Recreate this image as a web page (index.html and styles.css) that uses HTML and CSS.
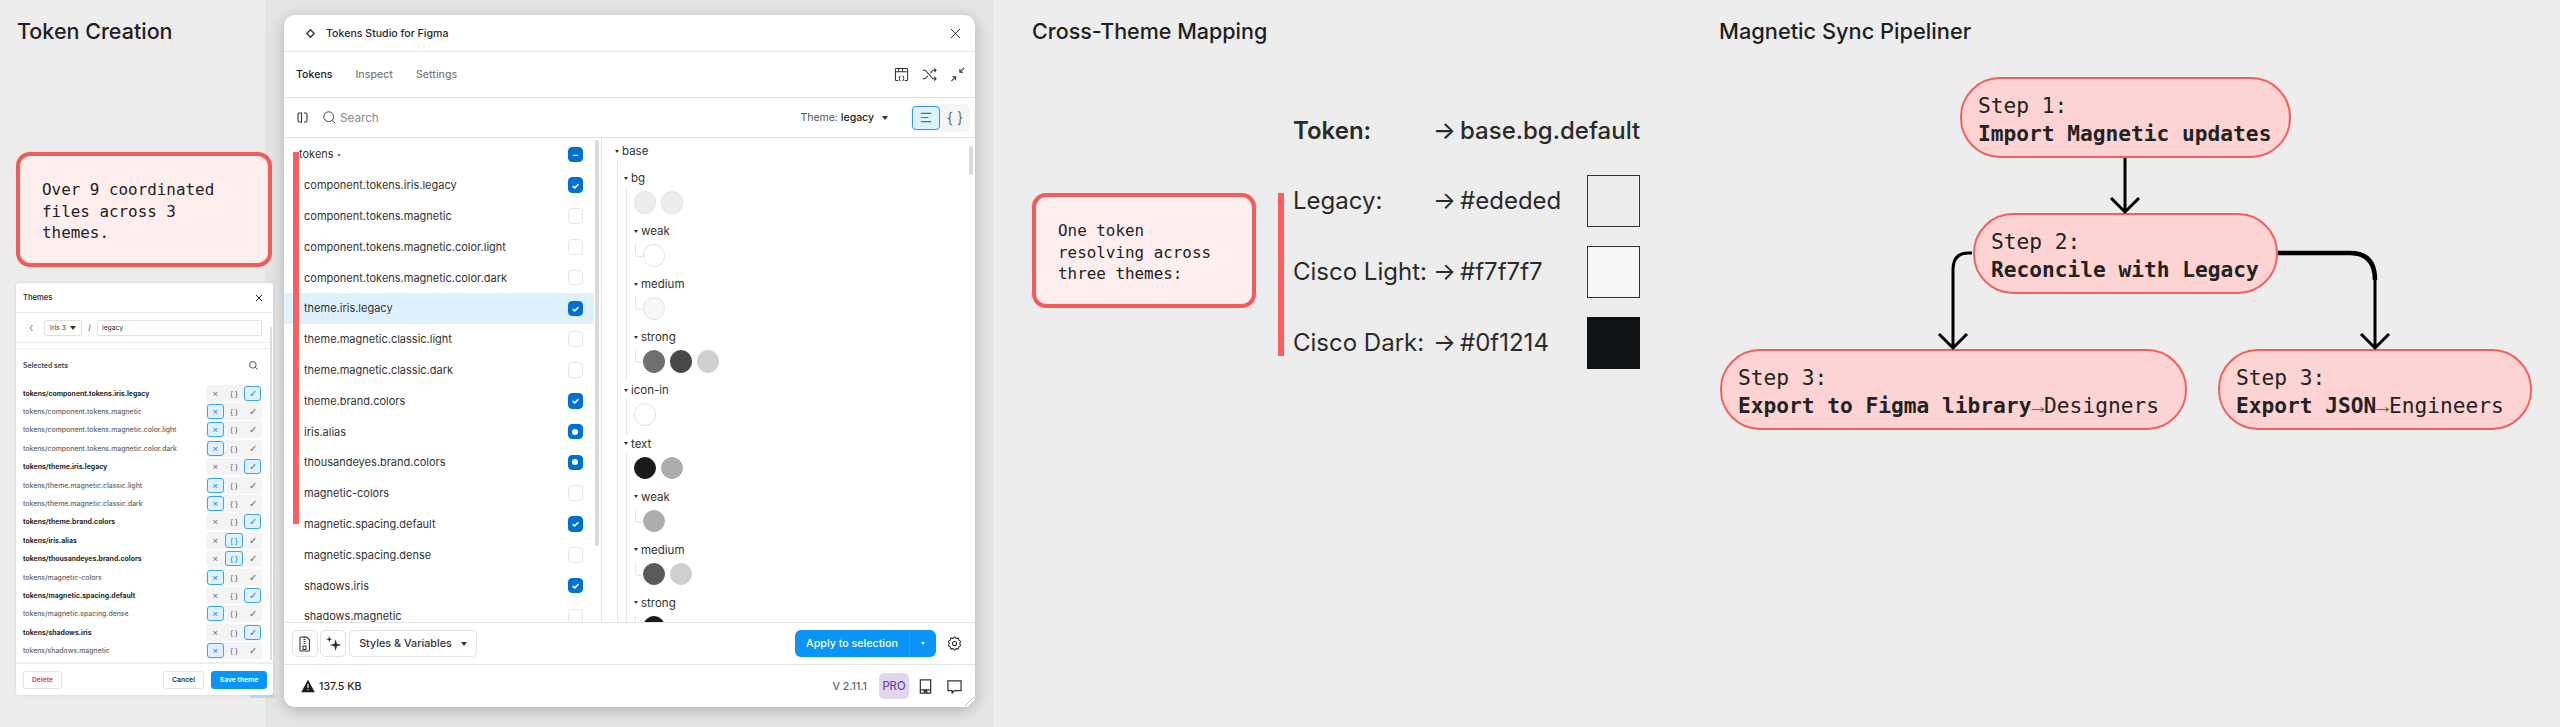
FILE: index.html
```html
<!DOCTYPE html>
<html lang="en">
<head>
<meta charset="utf-8">
<title>Token pipeline</title>
<link rel="stylesheet" href="styles.css">
</head>
<body>
<div class="board">
  <section class="col-create">
    <h2 class="heading">Token Creation</h2>
    <div class="callout callout-create">Over 9 coordinated files across 3 themes.</div>
    <div class="themes">
      <i class="th-behind"></i>
      <i class="th-scroll"></i>
      <div class="th-head"><span>Themes</span><svg class="th-x" viewBox="0 0 10 10"><path d="M2 2l6 6M8 2l-6 6"/></svg></div>
      <div class="th-name">
        <svg class="th-back" viewBox="0 0 6 10"><path d="M4.5 2L2 5l2.5 3"/></svg>
        <div class="th-select">Iris 3 <i class="caret"></i></div>
        <span class="th-slash">/</span>
        <div class="th-input">legacy</div>
      </div>
      <div class="th-gap"></div>
      <div class="th-sets"><span>Selected sets</span><svg class="th-search" viewBox="0 0 12 12"><circle cx="5.3" cy="5.3" r="3.6"/><path d="M8 8l2.5 2.5"/></svg></div>
      <div class="th-list">
        <div class="th-row on"><span>tokens/component.tokens.iris.legacy</span><div class="seg"><b>×</b><b>{ }</b><b class="act">✓</b></div></div>
        <div class="th-row"><span>tokens/component.tokens.magnetic</span><div class="seg"><b class="act">×</b><b>{ }</b><b>✓</b></div></div>
        <div class="th-row"><span>tokens/component.tokens.magnetic.color.light</span><div class="seg"><b class="act">×</b><b>{ }</b><b>✓</b></div></div>
        <div class="th-row"><span>tokens/component.tokens.magnetic.color.dark</span><div class="seg"><b class="act">×</b><b>{ }</b><b>✓</b></div></div>
        <div class="th-row on"><span>tokens/theme.iris.legacy</span><div class="seg"><b>×</b><b>{ }</b><b class="act">✓</b></div></div>
        <div class="th-row"><span>tokens/theme.magnetic.classic.light</span><div class="seg"><b class="act">×</b><b>{ }</b><b>✓</b></div></div>
        <div class="th-row"><span>tokens/theme.magnetic.classic.dark</span><div class="seg"><b class="act">×</b><b>{ }</b><b>✓</b></div></div>
        <div class="th-row on"><span>tokens/theme.brand.colors</span><div class="seg"><b>×</b><b>{ }</b><b class="act">✓</b></div></div>
        <div class="th-row on"><span>tokens/iris.alias</span><div class="seg"><b>×</b><b class="act">{ }</b><b>✓</b></div></div>
        <div class="th-row on"><span>tokens/thousandeyes.brand.colors</span><div class="seg"><b>×</b><b class="act">{ }</b><b>✓</b></div></div>
        <div class="th-row"><span>tokens/magnetic-colors</span><div class="seg"><b class="act">×</b><b>{ }</b><b>✓</b></div></div>
        <div class="th-row on"><span>tokens/magnetic.spacing.default</span><div class="seg"><b>×</b><b>{ }</b><b class="act">✓</b></div></div>
        <div class="th-row"><span>tokens/magnetic.spacing.dense</span><div class="seg"><b class="act">×</b><b>{ }</b><b>✓</b></div></div>
        <div class="th-row on"><span>tokens/shadows.iris</span><div class="seg"><b>×</b><b>{ }</b><b class="act">✓</b></div></div>
        <div class="th-row"><span>tokens/shadows.magnetic</span><div class="seg"><b class="act">×</b><b>{ }</b><b>✓</b></div></div>
      </div>
      <div class="th-foot">
        <div class="th-btn th-delete">Delete</div>
        <div class="th-spacer"></div>
        <div class="th-btn th-cancel">Cancel</div>
        <div class="th-btn th-save">Save theme</div>
      </div>
    </div>
  </section>

  <section class="col-plugin">
    <div class="win">
      <div class="w-title">
        <svg class="w-logo" viewBox="0 0 12 12"><path d="M6 2L10 6 6 10 2 6z"/></svg>
        <span>Tokens Studio for Figma</span>
        <svg class="w-close" viewBox="0 0 12 12"><path d="M1 1l10 10M11 1L1 11"/></svg>
      </div>
      <div class="w-tabs">
        <span class="tab tab-on">Tokens</span><span class="tab">Inspect</span><span class="tab">Settings</span>
        <div class="w-tab-icons">
          <svg class="ic" viewBox="0 0 16 16"><path d="M4.500 14.500H2.500a1 1 0 0 1-1-1V2.500a1 1 0 0 1 1-1h11a1 1 0 0 1 1 1v11a1 1 0 0 1-1 1H11.500M1.500 5h13M5 1.500V5M9 1.500V5M7 9.500q-1 0-1 1.200t-1 1.300q1 0 1 1.300t1 1.200M9 9.500q1 0 1 1.200t1 1.300q-1 0-1 1.300t-1 1.200"/></svg>
          <svg class="ic" viewBox="0 0 16 16"><path d="M1 3.500h2.500l8 9H15M1 12.500h2.500l2.500-3M9 6.500l2.500-3H15M13 1.500l2 2-2 2M13 10.500l2 2-2 2"/></svg>
          <svg class="ic" viewBox="0 0 16 16"><path d="M15 1l-4.500 4.500M10.500 2v3.500H14M1.500 15L6 10.500M2.500 10.500H6V14"/></svg>
        </div>
      </div>
      <div class="w-tool">
        <svg class="ic ic-side" viewBox="0 0 11 11"><path d="M4.500 1H2.500a1.500 1.500 0 0 0-1.500 1.500v6A1.500 1.500 0 0 0 2.500 10h2zM7 1h1.500A1.500 1.500 0 0 1 10 2.500v6A1.500 1.500 0 0 1 8.500 10H7"/></svg>
        <svg class="ic ic-search" viewBox="0 0 16 16"><circle cx="7" cy="7" r="6"/><path d="M11.500 11.500l3.500 3.500"/></svg>
        <span class="search">Search</span>
        <span class="theme">Theme: <em>legacy</em></span>
        <i class="caret caret-theme"></i>
        <div class="mode">
          <span class="mode-on"><svg class="ic ic-blue" viewBox="0 0 16 16"><path d="M2 3.500h11M2 8h8M2 12.500h11"/></svg></span>
          <span class="mode-off">{ }</span>
        </div>
      </div>
      <div class="w-body">
        <div class="sets">
          <i class="redbar"></i>
          <div class="set set-root"><span>tokens <i class="caret caret-small caret-grey"></i></span><i class="cb cb-on">–</i></div>
          <div class="set"><span>component.tokens.iris.legacy</span><i class="cb cb-on">✓</i></div>
          <div class="set"><span>component.tokens.magnetic</span><i class="cb"></i></div>
          <div class="set"><span>component.tokens.magnetic.color.light</span><i class="cb"></i></div>
          <div class="set"><span>component.tokens.magnetic.color.dark</span><i class="cb"></i></div>
          <div class="set set-sel"><span>theme.iris.legacy</span><i class="cb cb-on">✓</i></div>
          <div class="set"><span>theme.magnetic.classic.light</span><i class="cb"></i></div>
          <div class="set"><span>theme.magnetic.classic.dark</span><i class="cb"></i></div>
          <div class="set"><span>theme.brand.colors</span><i class="cb cb-on">✓</i></div>
          <div class="set"><span>iris.alias</span><i class="cb cb-on cb-dot"></i></div>
          <div class="set"><span>thousandeyes.brand.colors</span><i class="cb cb-on cb-dot"></i></div>
          <div class="set"><span>magnetic-colors</span><i class="cb"></i></div>
          <div class="set"><span>magnetic.spacing.default</span><i class="cb cb-on">✓</i></div>
          <div class="set"><span>magnetic.spacing.dense</span><i class="cb"></i></div>
          <div class="set"><span>shadows.iris</span><i class="cb cb-on">✓</i></div>
          <div class="set"><span>shadows.magnetic</span><i class="cb"></i></div>
          <i class="thumb thumb-sets"></i>
        </div>
        <div class="tree">
          <i class="thumb thumb-tree"></i>
          <div class="t-h t-top"><i class="caret caret-small"></i>base</div>
          <div class="t-group">
            <div class="t-h t-h2"><i class="caret caret-small"></i>bg</div>
            <div class="t-group2">
              <div class="dots"><i class="dot d-e"></i><i class="dot d-e"></i></div>
              <div class="t-h t-sub"><i class="caret caret-small"></i>weak</div>
              <div class="dots dots-in"><i class="dot d-w"></i></div>
              <div class="t-h t-sub"><i class="caret caret-small"></i>medium</div>
              <div class="dots dots-in"><i class="dot d-f"></i></div>
              <div class="t-h t-sub"><i class="caret caret-small"></i>strong</div>
              <div class="dots dots-in"><i class="dot d-6"></i><i class="dot d-4"></i><i class="dot d-c"></i></div>
            </div>
            <div class="t-h t-h2"><i class="caret caret-small"></i>icon-in</div>
            <div class="t-group2">
              <div class="dots"><i class="dot d-w"></i></div>
            </div>
            <div class="t-h t-h2"><i class="caret caret-small"></i>text</div>
            <div class="t-group2">
              <div class="dots"><i class="dot d-1"></i><i class="dot d-a"></i></div>
              <div class="t-h t-sub"><i class="caret caret-small"></i>weak</div>
              <div class="dots dots-in"><i class="dot d-a"></i></div>
              <div class="t-h t-sub"><i class="caret caret-small"></i>medium</div>
              <div class="dots dots-in"><i class="dot d-5"></i><i class="dot d-c"></i></div>
              <div class="t-h t-sub"><i class="caret caret-small"></i>strong</div>
              <div class="dots dots-in"><i class="dot d-1"></i></div>
            </div>
          </div>
        </div>
      </div>
      <div class="w-actions">
        <span class="sq"><svg class="ic ic-zip" viewBox="0 0 16 16"><path d="M4 1h5.500L12.500 4v10a1 1 0 0 1-1 1H4a1 1 0 0 1-1-1V2a1 1 0 0 1 1-1zM6.500 1.500h2M8.500 3.500h-2M6.500 5.500h2M8.500 7.500h-2M6 10h3v3.500H6z"/></svg></span>
        <span class="sq"><svg class="ic ic-spark" viewBox="0 0 16 16"><path class="fill" d="M10 4l1.200 4.300L15.500 9.500l-4.300 1.200L10 15l-1.200-4.300L4.500 9.500l4.300-1.200zM4 1l.7 2.300L7 4l-2.300.7L4 7l-.7-2.300L1 4l2.300-.7z"/></svg></span>
        <span class="sv">Styles &amp; Variables <i class="caret caret-sv"></i></span>
        <div class="apply"><span class="apply-main">Apply to selection</span><span class="apply-more"><i class="caret caret-apply"></i></span></div>
        <svg class="ic ic-gear" viewBox="0 0 16 16"><circle cx="8" cy="8" r="2.200"/><path d="M8 1l1.700 1.500 2.300-.2.600 2.200 1.900 1.300-.9 2.200.9 2.200-1.900 1.300-.6 2.200-2.300-.2L8 15l-1.700-1.500-2.300.2-.6-2.200L1.500 10.200 2.400 8l-.9-2.200L3.400 4.500l.6-2.200 2.300.2z"/></svg>
      </div>
      <div class="w-status">
        <svg class="warn" viewBox="0 0 14 14"><path d="M7 .8L13.800 13.200H.2z"/><path class="warn-mark" d="M7 5v4M7 10.300v1"/></svg>
        <span class="size">137.5 KB</span>
        <span class="ver">V 2.11.1</span>
        <span class="pro">PRO</span>
        <svg class="ic ic-book" viewBox="0 0 16 16"><path d="M2.500 1h11v14h-11zM2.500 11.500h11"/><path class="fill" d="M6 11.500h4V15.500L8 14l-2 1.500z"/></svg>
        <svg class="ic ic-chat" viewBox="0 0 16 16"><path d="M1 2h14v10.500H8l-2.500 2.500v-2.500H1z"/></svg>
        <svg class="grip" viewBox="0 0 10 10"><path d="M10 1L1 10M10 5L5 10"/></svg>
      </div>
    </div>
  </section>

  <section class="col-map">
    <h2 class="heading">Cross-Theme Mapping</h2>
    <div class="map">
      <div class="callout callout-map">One token resolving across three themes:</div>
      <div class="map-table">
        <i class="map-bar"></i>
        <div class="m-row m-head"><span>Token:</span><span>→</span><span>base.bg.default</span></div>
        <div class="m-row"><span>Legacy:</span><span>→</span><span>#ededed</span><i class="sw sw-1"></i></div>
        <div class="m-row"><span>Cisco Light:</span><span>→</span><span>#f7f7f7</span><i class="sw sw-2"></i></div>
        <div class="m-row"><span>Cisco Dark:</span><span>→</span><span>#0f1214</span><i class="sw sw-3"></i></div>
      </div>
    </div>
  </section>

  <section class="col-sync">
    <h2 class="heading heading-sync">Magnetic Sync Pipeliner</h2>
    <div class="flow">
      <svg class="edges" viewBox="0 0 860 727">
        <path class="e" d="M425 158V212M411 198L425 212L439 198"/>
        <path class="e" d="M272 253H268Q253 253 253 270V348M239 334L253 348L267 334"/>
        <path class="e e-thick" d="M578 253H650Q675 253 675 280"/>
        <path class="e" d="M675 280V348M661 334L675 348L689 334"/>
      </svg>
      <div class="node n1">Step 1:<br><b>Import Magnetic updates</b></div>
      <div class="node n2">Step 2:<br><b>Reconcile with Legacy</b></div>
      <div class="node n3">Step 3:<br><b>Export to Figma library</b><small>→</small>Designers</div>
      <div class="node n4">Step 3:<br><b>Export JSON</b><small>→</small>Engineers</div>
    </div>
  </section>
</div>
</body>
</html>
```

FILE: styles.css
```css
* { box-sizing: border-box; }
html, body { margin: 0; height: 100%; }
body { background: #ededed; color: #1f1f1f; font-family: Inter, "Liberation Sans", sans-serif; overflow: hidden; }
i, em, b { font-style: normal; }
.board { display: grid; grid-template-columns: 265px 728px 707px 860px; height: 727px; }
.heading { margin: 0; font-size: 21.500px; font-weight: 500; line-height: 26px; }
.heading-sync { font-size: 21.800px; }
.callout { background: #feeeee; border: 4px solid #f55a5a; border-radius: 14px; font-family: "DejaVu Sans Mono", monospace; font-size: 15.900px; line-height: 21.500px; color: #222; }

.col-create { padding: 18px 0 0 17px; }
.callout-create { width: 256px; height: 115px; margin: 108px 0 0 -1px; padding: 23px 22px; position: relative; z-index: 1; }

.themes { width: 257px; height: 412px; margin: 16px 0 0 -1px; background: #fff; border-radius: 3px; box-shadow: 0 0 3px rgba(0,0,0,.12); display: flex; flex-direction: column; font-size: 7.300px; color: #333; position: relative; z-index: 1; }
.th-behind { position: absolute; left: 234px; top: 412px; width: 25px; height: 3px; background: #b9d8ef; }
.th-scroll { position: absolute; right: 1px; top: 44px; width: 2px; height: 333px; background: #dcdcdc; border-radius: 1px; }
.th-head { height: 30px; display: flex; align-items: center; justify-content: space-between; padding: 0 9px 0 7px; border-bottom: 1px solid #e9e9e9; font-weight: 600; font-size: 7.500px; }
.th-x { width: 10px; height: 10px; fill: none; stroke: #222; stroke-width: 1; }
.th-name { display: flex; align-items: center; height: 30px; padding: 0 11px 0 12px; border-bottom: 1px solid #eee; }
.th-back { width: 6px; height: 10px; fill: none; stroke: #777; stroke-width: 1; margin-right: 10px; }
.th-select { width: 38px; height: 16px; border: 1px solid #e0e0e0; border-radius: 3px; display: flex; align-items: center; justify-content: center; gap: 4px; font-size: 6.800px; }
.th-slash { width: 15px; text-align: center; }
.th-input { flex: 1; height: 16px; border: 1px solid #e0e0e0; border-radius: 2px; padding-left: 4px; line-height: 14px; font-size: 6.800px; }
.th-gap { height: 6px; border-bottom: 1px solid #eee; margin-right: 4px; }
.th-sets { display: flex; align-items: center; justify-content: space-between; height: 32px; padding: 0 14px 0 7px; font-weight: 600; font-size: 6.900px; color: #444; }
.th-search { width: 11px; height: 11px; fill: none; stroke: #444; stroke-width: 1; }
.th-list { flex: 1; padding: 3px 11px 0 7px; }
.th-row { display: flex; justify-content: space-between; align-items: center; height: 18.400px; color: #666; font-size: 6.900px; font-weight: 500; }
.th-row.on { color: #2a2a2a; font-weight: 700; }
.seg { width: 56px; height: 17px; background: #f4f4f4; border-radius: 3px; display: grid; grid-template-columns: repeat(3, 1fr); }
.seg b { display: flex; align-items: center; justify-content: center; font-size: 8px; font-weight: 400; color: #666; font-family: "Liberation Sans", sans-serif; white-space: pre; }
.seg b:first-child, .seg b:last-child { font-size: 9.500px; }
.seg .act { background: #dff1fd; border: 1px solid #3aa6f0; border-radius: 3px; color: #1a7fd0; margin: 1px 0.500px; }
.th-foot { height: 33px; border-top: 2px solid #eeeeee; display: flex; align-items: center; padding: 0 6px 0 7px; gap: 7px; font-size: 6.800px; font-weight: 600; }
.th-spacer { flex: 1; }
.th-btn { height: 18px; display: flex; align-items: center; justify-content: center; border-radius: 3px; border: 1px solid #e6e6e6; }
.th-delete { width: 39px; color: #e23b4b; }
.th-cancel { width: 41px; color: #333; }
.th-save { width: 56px; color: #fff; background: #0a94f5; border-color: #0a94f5; }

.col-plugin { background: #e4e4e4; padding: 15px 0 0 19px; }
.win { width: 691px; height: 692px; background: #fff; border-radius: 11px; box-shadow: 0 3px 14px rgba(0,0,0,.22); display: flex; flex-direction: column; overflow: hidden; font-size: 11px; color: #2a2a2a; }
.ic { width: 15px; height: 15px; fill: none; stroke: #333; stroke-width: 1.100; flex: none; }
.w-title { height: 37px; border-bottom: 1px solid #e8e8e8; display: flex; align-items: center; padding: 0 14px 0 21px; font-weight: 500; font-size: 10.600px; }
.w-logo { width: 11px; height: 11px; fill: none; stroke: #333; stroke-width: 1.500; stroke-linejoin: round; margin-right: 10px; }
.w-close { width: 11px; height: 11px; fill: none; stroke: #222; stroke-width: 1; margin-left: auto; }
.w-tabs { height: 46px; border-bottom: 1px solid #e2e2e2; display: flex; align-items: center; padding: 0 10px 0 12px; gap: 23px; }
.tab { color: #7b7b7b; font-weight: 500; font-size: 10.600px; }
.tab-on { color: #222; }
.w-tab-icons { margin-left: auto; display: flex; gap: 13px; }
.w-tool { height: 40px; border-bottom: 1px solid #e2e2e2; display: flex; align-items: center; padding: 0 5px 0 13px; }
.ic-side { width: 11px; height: 11px; }
.ic-search { margin-left: 15px; margin-right: 4px; width: 13px; height: 13px; }
.search { color: #8a8a8a; font-size: 11.700px; }
.theme { margin-left: auto; font-size: 10.500px; color: #555; }
.theme em { color: #222; font-weight: 500; }
.caret { display: inline-block; width: 0; height: 0; border-left: 3px solid transparent; border-right: 3px solid transparent; border-top: 4px solid #333; flex: none; }
.caret-theme { margin: 0 22px 0 8px; }
.caret-small { border-left-width: 2.700px; border-right-width: 2.700px; border-top-width: 3.500px; vertical-align: middle; }
.caret-grey { border-top-color: #888; }
.mode { width: 60px; height: 28px; background: #f5f5f5; border-radius: 6px; display: flex; align-items: center; padding: 0 0 0 2px; }
.mode-on { width: 28px; height: 24px; background: #dff1fd; border: 1px solid #2a9bea; border-radius: 4px; display: flex; align-items: center; justify-content: center; }
.ic-blue { stroke: #1a7fd0; stroke-width: 1.300; }
.mode-off { flex: 1; text-align: center; font-size: 15px; color: #444; font-weight: 300; }
.w-body { flex: none; height: 484px; display: flex; overflow: hidden; }
.sets { width: 318px; border-right: 1px solid #e4e4e4; position: relative; padding-top: 1px; }
.redbar { position: absolute; left: 9px; top: 14px; width: 5.500px; height: 372px; background: #fb5f5f; z-index: 2; }
.set { height: 30.800px; display: flex; align-items: center; justify-content: space-between; padding: 0 11px 0 20px; width: 310px; font-size: 11px; color: #333; }
.set-root { padding-left: 15px; }
.set-sel { background: #def1fd; }
.cb { width: 15.500px; height: 15.500px; border: 1.500px solid #e6e6e6; border-radius: 4px; display: flex; align-items: center; justify-content: center; font-size: 9px; font-weight: 800; color: #fff; background: #fff; }
.cb-on { background: #0070d2; border-color: #0070d2; }
.cb-dot::after { content: ""; width: 6px; height: 6px; border-radius: 50%; background: #fff; }
.thumb { position: absolute; background: #d9d9d9; border-radius: 2px; }
.thumb-sets { right: 2px; top: 2px; width: 4px; height: 406px; }
.thumb-tree { right: 2px; top: 8px; width: 4px; height: 29px; }
.tree { flex: 1; position: relative; padding: 4px 0 0 12.500px; font-size: 11.500px; color: #333; }
.t-h { height: 18px; display: flex; align-items: center; gap: 3.500px; }
.t-group { border-left: 1px solid #e6e6e6; margin-left: 2px; padding: 9px 0 0 6px; }
.t-group2 { border-left: 1px solid #e6e6e6; padding: 4px 0 9.300px 7px; margin-left: 2px; }
.t-sub { margin: 9px 0 4px; }
.dots { display: flex; gap: 4.500px; height: 22px; }
.dots-in { margin-left: 9px; position: relative; }
.dots-in::before { content: ""; position: absolute; left: -8px; top: 0; width: 6px; height: 12px; border-left: 1px solid #e3e3e3; border-bottom: 1px solid #e3e3e3; border-bottom-left-radius: 4px; }
.dot { width: 22.500px; height: 22.500px; border-radius: 50%; border: 1px solid #e3e3e3; background: #fff; }
.d-e { background: #ededed; }
.d-w { background: #fff; }
.d-f { background: #f7f7f7; }
.d-6 { background: #6f6f6f; border-color: #6f6f6f; }
.d-4 { background: #484848; border-color: #484848; }
.d-c { background: #cfcfcf; border-color: #cfcfcf; }
.d-1 { background: #1a1a1a; border-color: #1a1a1a; }
.d-a { background: #adadad; border-color: #adadad; }
.d-5 { background: #5a5a5a; border-color: #5a5a5a; }
.w-actions { height: 43px; border-top: 1px solid #e4e4e4; border-bottom: 1px solid #e4e4e4; display: flex; align-items: center; padding: 0 13px 0 8px; gap: 2px; }
.sq { width: 26px; height: 27px; border: 1px solid #e3e3e3; border-radius: 5px; display: flex; align-items: center; justify-content: center; }
.ic-zip { width: 16px; height: 16px; }
.ic-spark { width: 17px; height: 17px; }
.fill { fill: #333; stroke: none; }
.sv { width: 128px; height: 27px; border: 1px solid #e3e3e3; border-radius: 5px; display: flex; align-items: center; justify-content: center; gap: 9px; font-size: 10.800px; font-weight: 500; color: #333; margin-left: 1px; }
.caret-sv { border-left-width: 3.200px; border-right-width: 3.200px; }
.apply { margin-left: auto; width: 141px; height: 27px; border-radius: 6px; background: #0a94f5; color: #fff; display: flex; align-items: center; font-weight: 500; font-size: 10.700px; }
.apply-main { width: 115px; text-align: center; border-right: 1px solid #2ba3f7; line-height: 27px; }
.apply-more { flex: 1; display: flex; justify-content: center; }
.caret-apply { border-top-color: #fff; border-left-width: 2.200px; border-right-width: 2.200px; border-top-width: 3px; }
.ic-gear { margin-left: 9px; }
.w-status { flex: 1; display: flex; align-items: center; padding: 0 13px 0 17px; font-size: 10.600px; font-weight: 500; position: relative; }
.warn { width: 14px; height: 14px; fill: #1a1a1a; }
.warn-mark { fill: none; stroke: #fff; stroke-width: 1.200; }
.size { margin-left: 4px; }
.ver { margin-left: auto; color: #666; }
.pro { width: 30px; height: 26px; margin-left: 12px; background: #e2d6ee; color: #6d4a9e; border-radius: 5px; display: flex; align-items: center; justify-content: center; font-weight: 500; font-size: 11.300px; }
.ic-book { margin-left: 9px; stroke-width: 1.300; }
.ic-chat { margin-left: 14px; stroke-width: 1.300; }
.grip { position: absolute; right: 1px; bottom: 1px; width: 10px; height: 10px; fill: none; stroke: #aaa; stroke-width: .8; }

.col-map { padding: 18px 0 0 39px; }
.map { display: flex; align-items: flex-start; margin-top: 57px; }
.callout-map { width: 224px; height: 115px; margin-top: 92px; padding: 23px 22px; }
.map-table { position: relative; margin-left: 21px; padding-left: 16px; width: 364px; font-size: 24px; color: #2a2a2a; line-height: 29px; }
.map-bar { position: absolute; left: 1px; top: 92px; bottom: 22px; width: 6px; background: #fb5f5f; }
.m-row { display: grid; grid-template-columns: 140px 27px 127px 53px; align-items: center; height: 71px; }
.m-head { height: 59px; margin-bottom: 5px; font-weight: 600; }
.m-head span:last-child { grid-column: 3 / span 2; font-weight: 500; }
.m-head span:nth-child(2) { font-weight: 500; }
.sw { width: 53px; height: 52px; border: 1.500px solid #333; }
.sw-1 { background: #ededed; }
.sw-2 { background: #f7f7f7; }
.sw-3 { background: #0f1214; border-color: #0f1214; }

.col-sync { position: relative; padding: 18px 0 0 19px; }
.flow { position: absolute; inset: 0; }
.edges { position: absolute; left: 0; top: 0; width: 860px; height: 727px; z-index: 2; }
.e { fill: none; stroke: #000; stroke-width: 3; }
.e-thick { stroke-width: 4.500; }
.node { position: absolute; height: 81px; background: #fdd3d3; border: 2.500px solid #f55e5e; border-radius: 40px; font-family: "DejaVu Sans Mono", monospace; font-size: 21.200px; line-height: 28px; color: #222; padding: 12.500px 0 0 16px; white-space: nowrap; }
.node b { font-weight: 700; }
.node small { font-family: "Liberation Mono", monospace; font-size: 21.200px; color: #666; }
.n1 { left: 260px; top: 77px; width: 331px; }
.n2 { left: 273px; top: 213px; width: 305px; }
.n3 { left: 20px; top: 349px; width: 467px; }
.n4 { left: 518px; top: 349px; width: 314px; }
```
